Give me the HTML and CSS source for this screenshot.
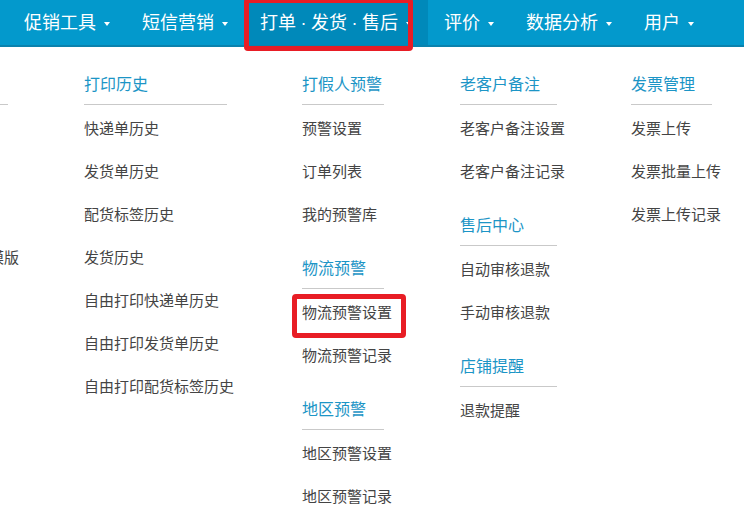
FILE: index.html
```html
<!DOCTYPE html>
<html lang="zh-CN">
<head>
<meta charset="utf-8">
<title>菜单</title>
<link rel="stylesheet" href="styles.css">
</head>
<body>
<nav class="nav">
  <div class="nav-item">促销工具<span class="caret"></span></div>
  <div class="nav-item">短信营销<span class="caret"></span></div>
  <div class="nav-item active">打单 · 发货 · 售后<span class="caret"></span><span class="mark mark-nav"></span></div>
  <div class="nav-item">评价<span class="caret"></span></div>
  <div class="nav-item">数据分析<span class="caret"></span></div>
  <div class="nav-item">用户<span class="caret"></span></div>
</nav>
<div class="menu">
  <div class="col col0">
    <div class="head">&nbsp;</div>
    <div class="item">&nbsp;</div>
    <div class="item">&nbsp;</div>
    <div class="item">&nbsp;</div>
    <div class="item">模版</div>
  </div>
  <div class="col col1">
    <div class="head">打印历史</div>
    <div class="item">快递单历史</div>
    <div class="item">发货单历史</div>
    <div class="item">配货标签历史</div>
    <div class="item">发货历史</div>
    <div class="item">自由打印快递单历史</div>
    <div class="item">自由打印发货单历史</div>
    <div class="item">自由打印配货标签历史</div>
  </div>
  <div class="col col2">
    <div class="head">打假人预警</div>
    <div class="item">预警设置</div>
    <div class="item">订单列表</div>
    <div class="item">我的预警库</div>
    <div class="head">物流预警</div>
    <div class="item marked">物流预警设置<span class="mark mark-item"></span></div>
    <div class="item">物流预警记录</div>
    <div class="head">地区预警</div>
    <div class="item">地区预警设置</div>
    <div class="item">地区预警记录</div>
  </div>
  <div class="col col3">
    <div class="head">老客户备注</div>
    <div class="item">老客户备注设置</div>
    <div class="item">老客户备注记录</div>
    <div class="head">售后中心</div>
    <div class="item">自动审核退款</div>
    <div class="item">手动审核退款</div>
    <div class="head">店铺提醒</div>
    <div class="item">退款提醒</div>
  </div>
  <div class="col col4">
    <div class="head">发票管理</div>
    <div class="item">发票上传</div>
    <div class="item">发票批量上传</div>
    <div class="item">发票上传记录</div>
  </div>
</div>
</body>
</html>
```

FILE: styles.css
```css
* { box-sizing: border-box; }
html, body {
  margin: 0;
  padding: 0;
  background: #ffffff;
  overflow: hidden;
}
body {
  width: 744px;
  height: 528px;
  font-family: "Liberation Sans", "Noto Sans CJK SC", sans-serif;
}
.nav {
  display: flex;
  height: 47px;
  padding-left: 8px;
  background: #0399cc;
  border-bottom: 2px solid #0a82ad;
}
.nav-item {
  position: relative;
  display: flex;
  align-items: center;
  padding: 2px 16px 0 16px;
  color: #ffffff;
  font-size: 18px;
  line-height: 43px;
  word-spacing: -0.5px;
  white-space: nowrap;
}
.nav-item.active {
  background: #0089ba;
}
.caret {
  display: inline-block;
  width: 0;
  height: 0;
  margin-left: 8px;
  margin-top: 1px;
  border-left: 3.5px solid transparent;
  border-right: 3.5px solid transparent;
  border-top: 4px solid #ffffff;
}
.mark {
  position: absolute;
  border: 5px solid #e81d25;
  border-radius: 4px;
  pointer-events: none;
}
.mark-nav {
  left: 0;
  top: -2px;
  width: 169px;
  height: 53px;
}
.menu {
  display: flex;
  margin-left: -11px;
  padding-top: 5px;
}
.col { flex: none; }
.col0 { width: 95px; }
.col1 { width: 218px; }
.col2 { width: 158px; }
.col3 { width: 171px; }
.col4 { width: 120px; }
.head {
  padding-top: 13px;
  line-height: 39px;
  font-size: 16px;
  color: #1c95c6;
  border-bottom: 1px solid #c9c9c9;
  margin-bottom: 2px;
  white-space: nowrap;
}
.col0 .head { width: 19px; }
.col1 .head { width: 143px; }
.col2 .head { width: 82px; }
.col3 .head { width: 97px; }
.col4 .head { width: 81px; }
.item {
  position: relative;
  line-height: 43px;
  font-size: 15px;
  color: #444444;
  white-space: nowrap;
}
.mark-item {
  left: -10px;
  top: 3px;
  width: 114px;
  height: 44px;
}
```
